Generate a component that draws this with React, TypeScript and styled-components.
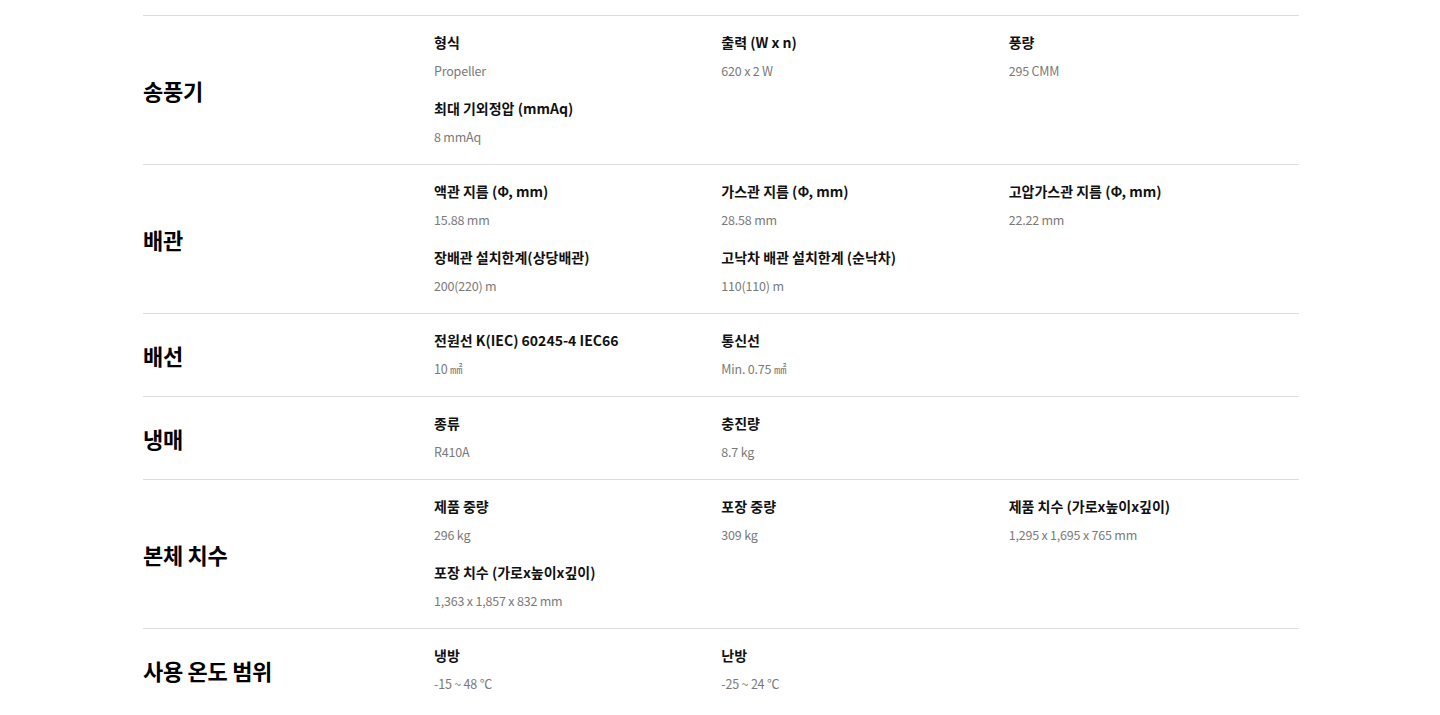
import React from 'react';
import styled, {createGlobalStyle} from 'styled-components';

type SpecItem = {
    title: string
    value: string
}

type SpecRowType = {
    label: string
    items: SpecItem[]
}

const specs: SpecRowType[] = [
    {
        label: '송풍기',
        items: [
            {title: '형식', value: 'Propeller'},
            {title: '출력 (W x n)', value: '620 x 2 W'},
            {title: '풍량', value: '295 CMM'},
            {title: '최대 기외정압 (mmAq)', value: '8 mmAq'},
        ],
    },
    {
        label: '배관',
        items: [
            {title: '액관 지름 (Φ, mm)', value: '15.88 mm'},
            {title: '가스관 지름 (Φ, mm)', value: '28.58 mm'},
            {title: '고압가스관 지름 (Φ, mm)', value: '22.22 mm'},
            {title: '장배관 설치한계(상당배관)', value: '200(220) m'},
            {title: '고낙차 배관 설치한계 (순낙차)', value: '110(110) m'},
        ],
    },
    {
        label: '배선',
        items: [
            {title: '전원선 K(IEC) 60245-4 IEC66', value: '10 ㎟'},
            {title: '통신선', value: 'Min. 0.75 ㎟'},
        ],
    },
    {
        label: '냉매',
        items: [
            {title: '종류', value: 'R410A'},
            {title: '충진량', value: '8.7 kg'},
        ],
    },
    {
        label: '본체 치수',
        items: [
            {title: '제품 중량', value: '296 kg'},
            {title: '포장 중량', value: '309 kg'},
            {title: '제품 치수 (가로x높이x깊이)', value: '1,295 x 1,695 x 765 mm'},
            {title: '포장 치수 (가로x높이x깊이)', value: '1,363 x 1,857 x 832 mm'},
        ],
    },
    {
        label: '사용 온도 범위',
        items: [
            {title: '냉방', value: '-15 ~ 48 ℃'},
            {title: '난방', value: '-25 ~ 24 ℃'},
        ],
    },
]

const GlobalStyle = createGlobalStyle`
    body {
        margin: 0;
        background: #fff;
        font-family: "Noto Sans CJK KR", "Noto Sans", sans-serif;
        color: #000;
    }
`

export default function App() {
    return (
        <>
            <GlobalStyle/>
            <Page>
                <SpecList>
                    {specs.map(row => (
                        <Row key={row.label}>
                            <Label>{row.label}</Label>
                            <Items>
                                {row.items.map(item => (
                                    <Item key={item.title}>
                                        <Title>{item.title}</Title>
                                        <Value>{item.value}</Value>
                                    </Item>
                                ))}
                            </Items>
                        </Row>
                    ))}
                </SpecList>
            </Page>
        </>
    )
}

const Page = styled.div`
    padding-top: 15px;
    padding-left: 143px;
`

const SpecList = styled.div`
    width: 1156px;
`

const Row = styled.div`
    display: grid;
    grid-template-columns: 291px 1fr;
    border-top: 1px solid #dddddd;
    padding: 16px 0 17px;
`

const Label = styled.div`
    display: flex;
    align-items: center;
    font-size: 22px;
    font-weight: 700;
    letter-spacing: -0.3px;
`

const Items = styled.div`
    display: grid;
    grid-template-columns: repeat(3, 1fr);
    row-gap: 17px;
    padding-right: 3px;
`

const Item = styled.div`
    display: flex;
    flex-direction: column;
    gap: 9px;
`

const Title = styled.span`
    font-size: 14px;
    line-height: 20px;
    font-weight: 700;
    color: #111;
`

const Value = styled.span`
    font-size: 12.5px;
    line-height: 20px;
    color: #7a7a7a;
    letter-spacing: -0.2px;
`
